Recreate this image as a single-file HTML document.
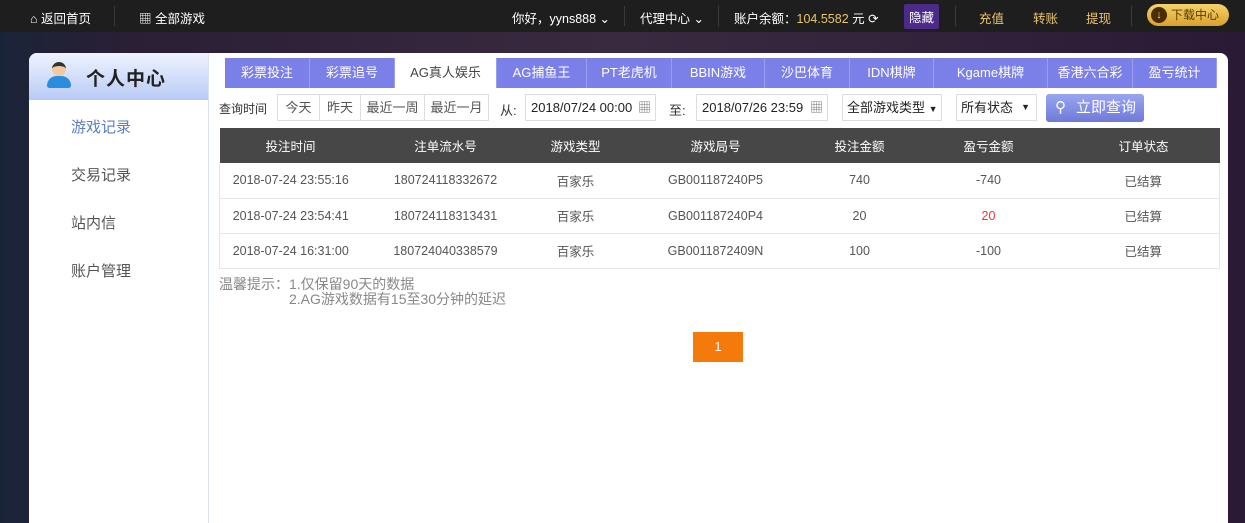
<!DOCTYPE html>
<html><head><meta charset="utf-8"><style>
*{margin:0;padding:0;box-sizing:border-box}
body{width:1245px;height:513px;overflow:hidden;font-family:"Liberation Sans","Noto Sans CJK SC",sans-serif;font-size:13px;color:#444;background:linear-gradient(90deg,#1a2438 0%,#2a1f35 10%,#3a2a40 50%,#2a1a35 100%);position:relative}
.top{position:absolute;left:0;top:0;width:1245px;height:32px;background:#1e1e1e;color:#fff;font-size:12.5px}
.top span{position:absolute;top:8px;white-space:nowrap}
.sep{position:absolute;top:6px;width:1px;height:20px;background:#3a3a3a}
.gold{color:#e9c46a}
.panel{position:absolute;left:29px;top:53px;width:1199px;height:470px;background:#fff;border-radius:8px 8px 0 0}
.side{position:absolute;left:0;top:0;width:180px;height:470px;border-right:1px solid #dde3ee;border-radius:8px 0 0 0}
.sh{height:47px;background:linear-gradient(#eef3ff,#b9cbf5);border-radius:8px 0 0 0;position:relative}
.sh b{position:absolute;left:57px;top:11px;font-size:19px;color:#222;font-weight:bold;letter-spacing:1px}
.si{position:absolute;left:42px;font-size:15px;color:#555}
.tab{position:absolute;top:5px;height:30px;background:#7b7fe8;color:#fff;text-align:center;line-height:30px;font-size:13px;border-right:1px solid #9a9df0}
.tab.a{background:#fff;color:#444}
.btn{position:absolute;top:41px;height:27px;border:1px solid #ddd;line-height:25px;text-align:center;font-size:13px;color:#555;background:#fff}
table{position:absolute;left:190px;top:75px;width:1000px;border-collapse:collapse;font-size:12.5px;table-layout:fixed}
th{background:#474747;color:#fff;height:35px;font-weight:normal}
td{height:35px;text-align:center;border-bottom:1px solid #e6e6e6;color:#555}
tr td:first-child{border-left:1px solid #e6e6e6}tr td:last-child{border-right:1px solid #e6e6e6}
</style></head><body>
<div class="top">
<span style="left:30px">⌂ 返回首页</span><div class="sep" style="left:114px"></div>
<span style="left:139px">▦ 全部游戏</span>
<span style="left:512px">你好，yyns888 ⌄</span><div class="sep" style="left:624px"></div>
<span style="left:640px">代理中心 ⌄</span><div class="sep" style="left:718px"></div>
<span style="left:734px">账户余额：<span class="gold" style="position:static">104.5582</span> 元 ⟳</span>
<span style="left:904px;top:4px;background:#4b2a8a;padding:3px 5px;border-radius:2px">隐藏</span>
<div class="sep" style="left:955px"></div>
<span class="gold" style="left:979px">充值</span><span class="gold" style="left:1033px">转账</span><span class="gold" style="left:1086px">提现</span>
<div class="sep" style="left:1131px"></div>
<span style="left:1147px;top:4px;height:22px;width:82px;border-radius:11px;background:linear-gradient(#f6d36a,#d9a12c);color:#5a3a00;line-height:22px;padding-left:24px;font-size:12px">下载中心<i style="position:absolute;left:4px;top:3px;width:16px;height:16px;border-radius:8px;background:#4a2c00;color:#f6d36a;font-style:normal;font-size:11px;line-height:16px;text-align:center">↓</i></span>
</div>
<div class="panel">
<div class="side"><div class="sh"><div style="position:absolute;left:18px;top:9px;width:24px;height:28px"><div style="width:14px;height:14px;border-radius:7px;background:#f3c9a0;margin-left:5px;border-top:4px solid #333"></div><div style="width:24px;height:12px;border-radius:12px 12px 3px 3px;background:#2a8de0"></div></div><b>个人中心</b></div>
<div class="si" style="top:63px;color:#5a7fc0">游戏记录</div><div class="si" style="top:111px">交易记录</div><div class="si" style="top:159px">站内信</div><div class="si" style="top:207px">账户管理</div></div>
<div class="tab" style="left:196px;width:85px">彩票投注</div><div class="tab" style="left:281px;width:85px">彩票追号</div><div class="tab a" style="left:366px;width:102px">AG真人娱乐</div><div class="tab" style="left:468px;width:90px">AG捕鱼王</div><div class="tab" style="left:558px;width:85px">PT老虎机</div><div class="tab" style="left:643px;width:93px">BBIN游戏</div><div class="tab" style="left:736px;width:85px">沙巴体育</div><div class="tab" style="left:821px;width:84px">IDN棋牌</div><div class="tab" style="left:905px;width:114px">Kgame棋牌</div><div class="tab" style="left:1019px;width:85px">香港六合彩</div><div class="tab" style="left:1104px;width:84px">盈亏统计</div>
<div style="position:absolute;left:190px;top:47px;font-size:12px;color:#333">查询时间</div>
<div class="btn" style="left:248px;width:43px">今天</div><div class="btn" style="left:290px;width:42px">昨天</div><div class="btn" style="left:331px;width:65px">最近一周</div><div class="btn" style="left:395px;width:65px">最近一月</div>
<div style="position:absolute;left:471px;top:47px;color:#333">从:</div>
<div class="btn" style="left:496px;width:131px;text-align:left;padding-left:5px;color:#222">2018/07/24 00:00 <span style="position:absolute;right:4px;color:#777">▦</span></div>
<div style="position:absolute;left:640px;top:47px;color:#333">至:</div>
<div class="btn" style="left:667px;width:132px;text-align:left;padding-left:5px;color:#222">2018/07/26 23:59 <span style="position:absolute;right:4px;color:#777">▦</span></div>
<div class="btn" style="left:813px;width:100px;text-align:left;padding-left:4px;color:#222">全部游戏类型 <span style="font-size:9px">▼</span></div>
<div class="btn" style="left:927px;width:81px;text-align:left;padding-left:4px;color:#222">所有状态 <span style="font-size:9px;position:absolute;right:6px">▼</span></div>
<div style="position:absolute;left:1017px;top:41px;width:98px;height:28px;background:linear-gradient(#9aa5f0,#6f7ad8);border-radius:3px;color:#fff;font-size:15px;line-height:28px;padding-left:30px">立即查询<span style="position:absolute;left:9px;top:0">⚲</span></div>
<table><colgroup><col style="width:142px"><col style="width:168px"><col style="width:92px"><col style="width:188px"><col style="width:100px"><col style="width:158px"><col style="width:152px"></colgroup>
<tr><th>投注时间</th><th>注单流水号</th><th>游戏类型</th><th>游戏局号</th><th>投注金额</th><th>盈亏金额</th><th>订单状态</th></tr>
<tr><td>2018-07-24 23:55:16</td><td>180724118332672</td><td>百家乐</td><td>GB001187240P5</td><td>740</td><td>-740</td><td>已结算</td></tr>
<tr><td>2018-07-24 23:54:41</td><td>180724118313431</td><td>百家乐</td><td>GB001187240P4</td><td>20</td><td style="color:#e53935">20</td><td>已结算</td></tr>
<tr><td>2018-07-24 16:31:00</td><td>180724040338579</td><td>百家乐</td><td>GB0011872409N</td><td>100</td><td>-100</td><td>已结算</td></tr></table>
<div style="position:absolute;left:190px;top:224px;font-size:14px;color:#888;line-height:15px">温馨提示：1.仅保留90天的数据<br><span style="padding-left:70px">2.AG游戏数据有15至30分钟的延迟</span></div>
<div style="position:absolute;left:664px;top:279px;width:50px;height:30px;background:#f47a0c;color:#fff;text-align:center;line-height:30px;font-size:13px">1</div>
</div>
</body></html>
